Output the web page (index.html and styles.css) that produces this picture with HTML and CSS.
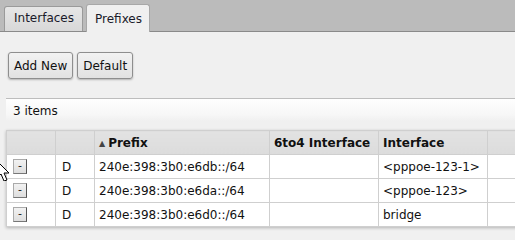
FILE: index.html
```html
<!DOCTYPE html>
<html>
<head>
<meta charset="utf-8">
<link rel="stylesheet" href="styles.css">
</head>
<body>
<div class="tabbar">
  <div class="tab">Interfaces</div>
  <div class="tab active">Prefixes</div>
</div>
<div class="content">
  <div class="toolbar">
    <button class="btn">Add New</button>
    <button class="btn">Default</button>
  </div>
  <div class="itemsbar">3 items</div>
  <table class="grid">
    <colgroup>
      <col class="c1"><col class="c2"><col class="c3"><col class="c4"><col class="c5"><col class="c6">
    </colgroup>
    <thead>
      <tr><th></th><th></th><th><span class="sort">&#9650;</span>Prefix</th><th>6to4 Interface</th><th>Interface</th><th></th></tr>
    </thead>
    <tbody>
      <tr><td><span class="del">-</span></td><td>D</td><td>240e:398:3b0:e6db::/64</td><td></td><td>&lt;pppoe-123-1&gt;</td><td></td></tr>
      <tr><td><span class="del">-</span></td><td>D</td><td>240e:398:3b0:e6da::/64</td><td></td><td>&lt;pppoe-123&gt;</td><td></td></tr>
      <tr><td><span class="del">-</span></td><td>D</td><td>240e:398:3b0:e6d0::/64</td><td></td><td>bridge</td><td></td></tr>
    </tbody>
  </table>
</div>
<svg class="cursor" width="12" height="20" viewBox="0 0 12 20"><path d="M-3 0 L9 12 L4 12 L7 19 L4 20 L1 13 L-3 17 Z" fill="#fff" stroke="#000" stroke-width="1"/></svg>
</body>
</html>
```
FILE: styles.css
```css
html, body {
  margin: 0;
  padding: 0;
  background: #f0f0f0;
  font-family: "DejaVu Sans", Verdana, sans-serif;
  font-size: 12px;
  color: #111;
  overflow: hidden;
  width: 515px;
  height: 240px;
}
.tabbar {
  height: 31px;
  background: #bbbbbb;
  border-bottom: 1px solid #8a8a8a;
  display: flex;
  align-items: flex-end;
  padding-left: 4px;
  gap: 3px;
}
.tab {
  height: 24px;
  line-height: 23px;
  padding: 0 8px 0 9px;
  background: linear-gradient(#e6e6e6, #d8d8d8);
  border: 1px solid #9a9a9a;
  border-bottom: none;
  border-radius: 3px 3px 0 0;
  color: #1a1a2a;
  width: 60px;
}
.tab.active {
  height: 27px;
  line-height: 28px;
  background: #f0f0f0;
  border-color: #a8a8a8;
  margin-bottom: -1px;
  width: 46px;
  padding: 0 8px 0 8px;
}
.content {
  padding: 20px 0 0 6px;
  overflow: hidden;
  height: 188px;
}
.toolbar {
  display: flex;
  gap: 4px;
  padding-left: 2px;
}
.btn {
  font-family: inherit;
  font-size: 12px;
  color: #111;
  height: 27px;
  padding: 0 5px;
  background: linear-gradient(#f2f2f2, #e2e2e2);
  border: 1px solid #8e8e8e;
  border-radius: 3px;
  box-shadow: 0 1px 2px rgba(0,0,0,0.25);
  margin: 0;
}
.itemsbar {
  margin-top: 19px;
  height: 22px;
  line-height: 25px;
  padding-left: 7px;
  border-top: 1px solid #bdbdbd;
  background: linear-gradient(#fefefe, #f7f7f7 70%, #f0f0f0);
}
.grid {
  margin-top: 9px;
  border-collapse: collapse;
  table-layout: fixed;
  width: 560px;
  background: #fff;
  box-shadow: 0 1px 3px rgba(0,0,0,0.25);
}
.c1 { width: 49px; }
.c2 { width: 39px; }
.c3 { width: 175px; }
.c4 { width: 109px; }
.c5 { width: 109px; }
.c6 { width: 79px; }
.grid th, .grid td {
  border: 1px solid #cfcfcf;
  height: 23px;
  padding: 0 0 0 4px;
  text-align: left;
  white-space: nowrap;
  overflow: hidden;
}
.grid th {
  background: linear-gradient(#e2e2e2, #dcdcdc);
  font-weight: bold;
  font-size: 12px;
  color: #111;
}
.grid td:first-child {
  padding-left: 6px;
}
.grid td:nth-child(2) {
  padding-left: 6px;
}
.sort {
  font-size: 8px;
  color: #444;
  margin-right: 3px;
  vertical-align: 1px;
}
.del {
  display: inline-block;
  width: 12px;
  height: 13px;
  line-height: 12px;
  text-align: center;
  font-size: 11px;
  background: linear-gradient(#f2f2f2, #dedede);
  border: 1px solid #aaa;
  border-right-color: #555;
  border-bottom-color: #777;
  vertical-align: middle;
}
.cursor {
  position: absolute;
  left: 0;
  top: 161px;
}
```
